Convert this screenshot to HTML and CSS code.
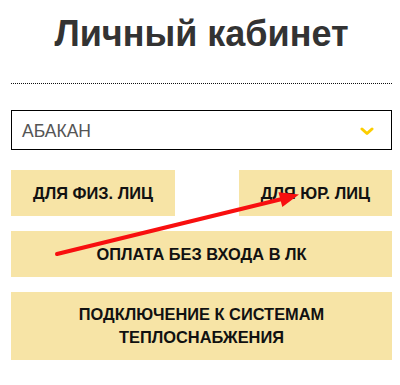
FILE: index.html
```html
<!DOCTYPE html>
<html lang="ru">
<head>
<meta charset="utf-8">
<title>Личный кабинет</title>
<link rel="stylesheet" href="styles.css">
</head>
<body>
<div class="page">
  <h1 class="title">Личный кабинет</h1>
  <div class="divider"></div>
  <div class="select">
    <span class="select-value">АБАКАН</span>
    <svg class="chevron" width="14" height="9" viewBox="0 0 14 9"><polyline points="2,2 7,6.5 12,2" fill="none" stroke="#fcce00" stroke-width="3" stroke-linecap="round" stroke-linejoin="round"/></svg>
  </div>
  <div class="row">
    <a class="btn">ДЛЯ ФИЗ. ЛИЦ</a>
    <a class="btn">ДЛЯ ЮР. ЛИЦ</a>
  </div>
  <a class="btn wide">ОПЛАТА БЕЗ ВХОДА В ЛК</a>
  <a class="btn wide tall">ПОДКЛЮЧЕНИЕ К СИСТЕМАМ<br>ТЕПЛОСНАБЖЕНИЯ</a>
</div>
<svg class="arrow" width="400" height="385" viewBox="0 0 400 385">
  <line x1="57" y1="254" x2="284" y2="198.5" stroke="#f80f0f" stroke-width="4" stroke-linecap="round"/>
  <polygon points="299,194.6 278.5,192.3 282.3,207" fill="#f80f0f"/>
</svg>
</body>
</html>
```

FILE: styles.css
```css
html, body {
  margin: 0;
  padding: 0;
  background: #fff;
}
body {
  font-family: "Liberation Sans", Arial, sans-serif;
  position: relative;
  width: 400px;
  height: 385px;
  overflow: hidden;
}
.page {
  margin: 0 8px 0 11px;
  display: flex;
  flex-direction: column;
}
.title {
  margin: 0;
  padding-top: 14px;
  font-size: 36px;
  line-height: 40px;
  font-weight: bold;
  color: #333;
  text-align: center;
}
.divider {
  margin-top: 29px;
  height: 0;
  border-top: 1px dotted #111;
}
.select {
  margin-top: 26px;
  box-sizing: border-box;
  height: 40px;
  border: 1px solid #000;
  padding: 3px 17px 0 10px;
  display: flex;
  align-items: center;
  justify-content: space-between;
}
.select-value {
  font-size: 17.5px;
  line-height: 35px;
  color: #555;
}
.row {
  margin-top: 20px;
  display: flex;
  justify-content: space-between;
}
.btn {
  box-sizing: border-box;
  height: 46px;
  padding: 0 22px;
  background: #f7e4a6;
  color: #111;
  font-size: 16.4px;
  font-weight: bold;
  display: flex;
  align-items: center;
  justify-content: center;
  text-align: center;
  text-decoration: none;
}
.wide {
  margin-top: 15px;
}
.tall {
  height: 68px;
  line-height: 23px;
}
.arrow {
  position: absolute;
  left: 0;
  top: 0;
  pointer-events: none;
}
```
